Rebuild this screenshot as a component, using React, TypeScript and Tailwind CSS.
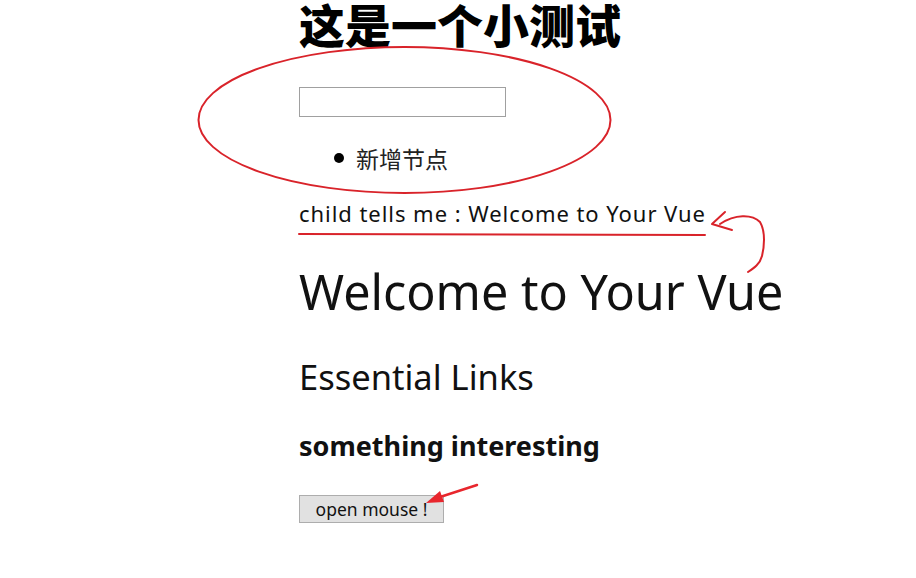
import React from "react";

export default function App() {
  const sans = { fontFamily: '"Noto Sans", "Noto Sans CJK SC", sans-serif' } as React.CSSProperties;
  const cjk = { fontFamily: '"Noto Sans CJK SC", sans-serif' } as React.CSSProperties;
  return (
    <div className="relative w-[916px] h-[578px] bg-white overflow-hidden text-black" style={sans}>
      <div className="flex flex-col items-start pl-[299px]">
        <h1 className="text-[46px] leading-[46px] font-black h-[50px] whitespace-nowrap" style={cjk}>
          这是一个小测试
        </h1>
        <input className="mt-[37px] w-[207px] h-[30px] border border-[#a0a0a0] bg-white outline-none" />
        <ul className="mt-[28px] ml-[35px]">
          <li className="flex items-center h-[26px] text-[23px] leading-[26px] text-[#222]">
            <span className="w-[10px] h-[10px] rounded-full bg-black mr-[12px]" />
            <span style={cjk}>新增节点</span>
          </li>
        </ul>
        <div className="mt-[29px] text-[22px] leading-[26px] tracking-[0.95px] whitespace-nowrap text-[#111]">child tells me : Welcome to Your Vue</div>
        <div className="mt-[35px] text-[48.5px] leading-[60px] whitespace-nowrap text-[#111]">Welcome to Your Vue</div>
        <div className="mt-[34px] text-[34.5px] leading-[44px] whitespace-nowrap text-[#111]">Essential Links</div>
        <div className="mt-[31px] text-[27px] leading-[32px] font-bold whitespace-nowrap text-[#111]">something interesting</div>
        <button
          className="mt-[33px] w-[145px] h-[28px] bg-[#e1e1e1] border border-[#adadad] text-[17.5px] leading-[26px] text-[#111]"
          style={sans}
        >
          open mouse !
        </button>
      </div>
      <svg className="absolute inset-0 pointer-events-none" width="916" height="578" viewBox="0 0 916 578">
        <ellipse cx="404.5" cy="120" rx="206" ry="73" fill="none" stroke="#d9232a" strokeWidth="2" />
        <path d="M299 234 L705 235" fill="none" stroke="#d9232a" strokeWidth="2" strokeLinecap="round" />
        <path d="M725 212 L712 224 L732 230" fill="none" stroke="#d9232a" strokeWidth="2" strokeLinecap="round" strokeLinejoin="round" />
        <path d="M720 224 C735 214 752 214 760 222 C766 232 764 248 762 256 C760 264 754 268 748 272" fill="none" stroke="#d9232a" strokeWidth="2" strokeLinecap="round" />
        <path d="M477 485 L437 498" fill="none" stroke="#e8262d" strokeWidth="2.5" strokeLinecap="round" />
        <path d="M426 503 L440 491 L444 502 Z" fill="#e8262d" />
      </svg>
    </div>
  );
}
